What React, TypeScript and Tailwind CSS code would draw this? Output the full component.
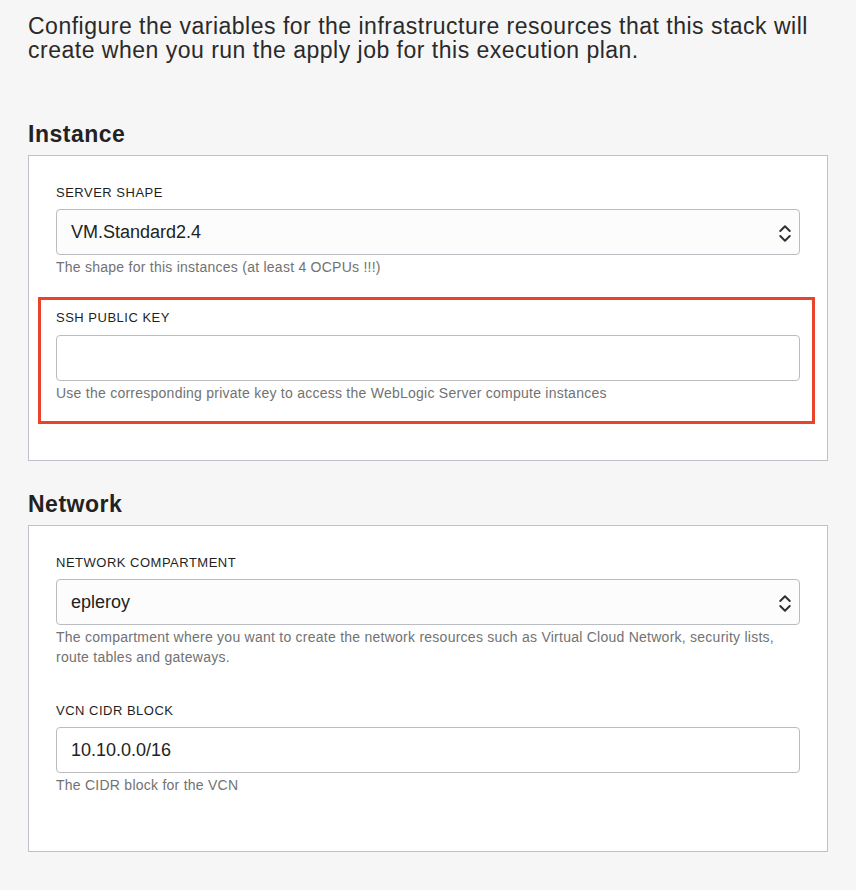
import React from "react";

function Chevrons() {
  return (
    <svg width="12" height="19" viewBox="0 0 12 19" fill="none" className="shrink-0 mt-[3px]">
      <path d="M1.25 7 L6 2.25 L10.75 7" stroke="#2e2e2e" strokeWidth="1.9" strokeLinecap="round" strokeLinejoin="round" />
      <path d="M1.25 12 L6 16.75 L10.75 12" stroke="#2e2e2e" strokeWidth="1.9" strokeLinecap="round" strokeLinejoin="round" />
    </svg>
  );
}

function Label({ children }: { children: React.ReactNode }) {
  return <div className="text-[13px] leading-[16px] tracking-[0.5px] text-[#1f1f1f] mb-[8px]">{children}</div>;
}

function Help({ children }: { children: React.ReactNode }) {
  return <div className="mt-[2px] text-[14px] leading-[20px] tracking-[0.25px] text-[#727272]">{children}</div>;
}

function Select({ value }: { value: string }) {
  return (
    <div className="h-[46px] border border-[#b9bcc1] rounded-[4px] bg-[#fcfcfc] flex items-center pl-[14px] pr-[8px]">
      <span className="flex-1 text-[18px] text-[#222]">{value}</span>
      <Chevrons />
    </div>
  );
}

function Input({ value }: { value?: string }) {
  return (
    <div className="h-[46px] border border-[#b9bcc1] rounded-[4px] bg-white flex items-center pl-[14px]">
      <span className="text-[18px] text-[#222]">{value}</span>
    </div>
  );
}

export default function App() {
  return (
    <div className="min-h-[890px] bg-[#f6f6f6] px-[28px] pt-[14px] pb-[38px] font-['Liberation_Sans',Arial,sans-serif]">
      <p className="text-[23px] leading-[24px] tracking-[0.5px] text-[#2a2a2a]">
        Configure the variables for the infrastructure resources that this stack will create when you run the apply job for this execution plan.
      </p>

      <h2 className="mt-[60px] mb-[9px] text-[23px] leading-[24px] tracking-[0.5px] font-bold text-[#222]">Instance</h2>
      <div className="border border-[#bfc3c9] bg-white px-[27px] pt-[29px] pb-[36px]">
        <Label>SERVER SHAPE</Label>
        <Select value="VM.Standard2.4" />
        <Help>The shape for this instances (at least 4 OCPUs !!!)</Help>

        <div className="mt-[20px] -ml-[18px] -mr-[15px] border-[3px] border-[#e8442b] pl-[15px] pr-[12px] pt-[10px] pb-[18px]">
          <div className="text-[13px] leading-[16px] tracking-[0.5px] text-[#1f1f1f] mb-[9px]">SSH PUBLIC KEY</div>
          <Input />
          <Help>Use the corresponding private key to access the WebLogic Server compute instances</Help>
        </div>
      </div>

      <h2 className="mt-[31px] mb-[9px] text-[23px] leading-[24px] tracking-[0.5px] font-bold text-[#222]">Network</h2>
      <div className="border border-[#bfc3c9] bg-white px-[27px] pt-[29px] pb-[56px]">
        <Label>NETWORK COMPARTMENT</Label>
        <Select value="epleroy" />
        <Help>
          The compartment where you want to create the network resources such as Virtual Cloud Network, security lists, route tables and gateways.
        </Help>

        <div className="mt-[36px]">
          <Label>VCN CIDR BLOCK</Label>
          <Input value="10.10.0.0/16" />
          <Help>The CIDR block for the VCN</Help>
        </div>
      </div>
    </div>
  );
}
